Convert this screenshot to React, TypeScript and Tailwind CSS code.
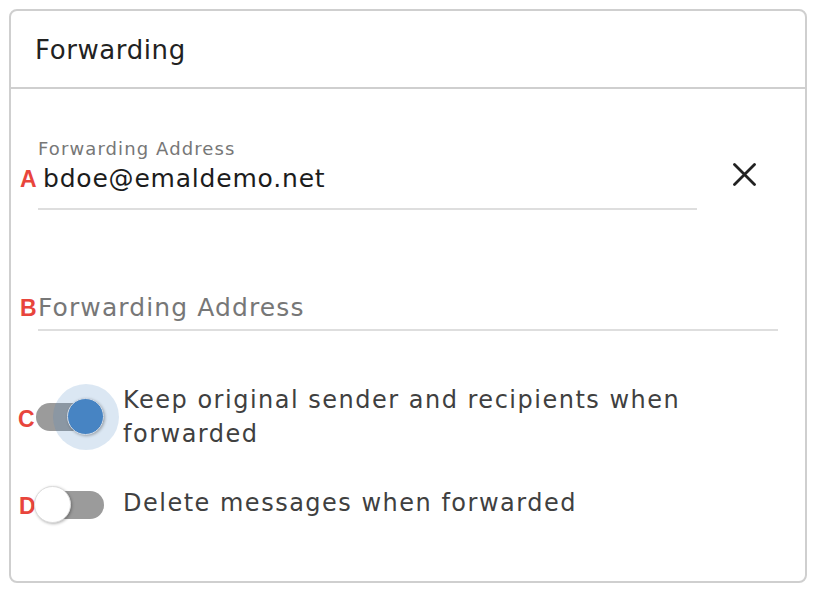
import React from "react";

const font = "font-['DejaVu_Sans',sans-serif]";
const marker = "font-['Liberation_Sans',Arial,sans-serif] text-[23px] leading-[24px] font-bold text-[#e8453c]";

function Toggle({ on }: { on: boolean }) {
  return (
    <div className="relative h-[40px] w-[72px] shrink-0">
      <div className="absolute left-[3px] top-[6px] h-[28px] w-[68px] rounded-full bg-[#9b9b9b]" />
      {on ? (
        <>
          <div className="absolute left-[20px] top-[-13px] h-[66px] w-[66px] rounded-full bg-[rgba(74,134,197,0.2)]" />
          <div className="absolute left-[34px] top-[1px] h-[37px] w-[37px] rounded-full border border-[#d6dde6] bg-[#4784c3] shadow-[1px_1px_3px_rgba(0,0,0,0.3)]" />
        </>
      ) : (
        <div className="absolute left-[1px] top-[1px] h-[37px] w-[37px] rounded-full border border-[#dcdcdc] bg-white shadow-[1px_1px_3px_rgba(0,0,0,0.3)]" />
      )}
    </div>
  );
}

export default function App() {
  return (
    <div className={`h-[590px] w-[818px] bg-white pl-[9px] pt-[9px] ${font}`}>
      <div className="h-[574px] w-[798px] rounded-[8px] border-2 border-[#cfcfcf]">
        <div className="h-[78px] border-b-2 border-[#cfcfcf] pl-[24px] pt-[24px]">
          <h1 className="text-[26px] leading-[30px] tracking-[0.6px] text-[#222]">Forwarding</h1>
        </div>

        <div className="px-[27px] pt-[49px]">
          {/* field A */}
          <div className="flex items-start">
            <div className="w-[659px] border-b-2 border-[#dedede] pb-[14px]">
              <div className="text-[18px] leading-[22px] tracking-[1.1px] text-[#777]">Forwarding Address</div>
              <div className="mt-[4px] flex items-baseline">
                <span className={`ml-[-18px] w-[23px] ${marker}`}>A</span>
                <span className="text-[25px] leading-[30px] tracking-[0.8px] text-[#1c1c1c]">bdoe@emaldemo.net</span>
              </div>
            </div>
            <svg className="ml-[36px] mt-[25px]" width="23" height="23" viewBox="0 0 23 23">
              <path d="M1.5 1.5 L21.5 21.5 M21.5 1.5 L1.5 21.5" stroke="#222" strokeWidth="2.8" strokeLinecap="round" />
            </svg>
          </div>

          {/* field B */}
          <div className="mt-[83px] flex items-baseline border-b-2 border-[#dedede] pb-[6px]">
            <span className={`ml-[-18px] w-[18px] ${marker}`}>B</span>
            <span className="text-[25px] leading-[30px] tracking-[1.1px] text-[#777]">Forwarding Address</span>
          </div>

          {/* toggles */}
          <div className="mt-[52px] flex items-start">
            <span className={`ml-[-20px] mt-[24px] w-[15px] ${marker}`}>C</span>
            <div className="mt-[14px]">
              <Toggle on />
            </div>
            <div className="ml-[18px] text-[24px] leading-[34px] tracking-[1.5px] text-[#404040]">
              Keep original sender and recipients when forwarded
            </div>
          </div>
          <div className="mt-[34px] flex items-start">
            <span className={`ml-[-19px] mt-[9px] w-[14px] ${marker}`}>D</span>
            <Toggle on={false} />
            <div className="ml-[18px] mt-[1px] text-[24px] leading-[34px] tracking-[1.5px] text-[#404040]">
              Delete messages when forwarded
            </div>
          </div>
        </div>
      </div>
    </div>
  );
}
